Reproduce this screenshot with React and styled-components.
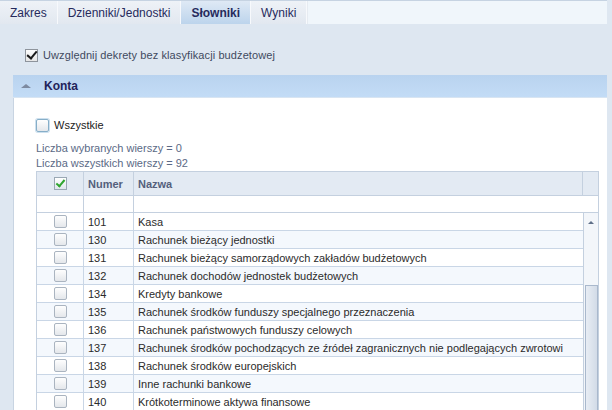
import styled, { createGlobalStyle } from "styled-components";

const GlobalStyle = createGlobalStyle`
  html, body {
    margin: 0;
    padding: 0;
    background: #dee7f1;
  }
  body {
    font-family: Tahoma, "Liberation Sans", Arial, sans-serif;
    font-size: 11px;
  }
`;

const rows = [
  ["101", "Kasa"],
  ["130", "Rachunek bieżący jednostki"],
  ["131", "Rachunek bieżący samorządowych zakładów budżetowych"],
  ["132", "Rachunek dochodów jednostek budżetowych"],
  ["134", "Kredyty bankowe"],
  ["135", "Rachunek środków funduszy specjalnego przeznaczenia"],
  ["136", "Rachunek państwowych funduszy celowych"],
  ["137", "Rachunek środków pochodzących ze źródeł zagranicznych nie podlegających zwrotowi"],
  ["138", "Rachunek środków europejskich"],
  ["139", "Inne rachunki bankowe"],
  ["140", "Krótkoterminowe aktywa finansowe"],
];

const tabs = ["Zakres", "Dzienniki/Jednostki", "Słowniki", "Wyniki"];

export default function App() {
  return (
    <>
      <GlobalStyle />
      <Page>
        <TabBar>
          {tabs.map((t) => (
            <Tab key={t} $active={t === "Słowniki"}>
              {t}
            </Tab>
          ))}
          <TabFill />
        </TabBar>

        <TopOption>
          <CheckBox $checked />
          <span>Uwzględnij dekrety bez klasyfikacji budżetowej</span>
        </TopOption>

        <Panel>
          <PanelHeader>
            <Triangle />
            Konta
          </PanelHeader>
          <PanelBody>
            <AllOption>
              <PlainBox $highlight />
              <span>Wszystkie</span>
            </AllOption>
            <Info>Liczba wybranych wierszy = 0</Info>
            <Info>Liczba wszystkich wierszy = 92</Info>

            <Grid>
              <HeadRow>
                <HeadCell $w={47} $center>
                  <GreenCheck />
                </HeadCell>
                <HeadCell $w={50}>Numer</HeadCell>
                <HeadCell $grow>Nazwa</HeadCell>
                <HeadCell $w={15} $last />
              </HeadRow>
              <FilterRow>
                <FilterCell $w={47} />
                <FilterCell $w={50} />
                <FilterCell $grow $last />
              </FilterRow>
              <Body>
                <Rows>
                  {rows.map(([num, name], i) => (
                    <Row key={num} $alt={i % 2 === 1}>
                      <Cell $w={47} $center>
                        <PlainBox />
                      </Cell>
                      <Cell $w={50}>{num}</Cell>
                      <Cell $grow $last>
                        {name}
                      </Cell>
                    </Row>
                  ))}
                </Rows>
                <ScrollBar>
                  <ScrollArrow />
                  <ScrollThumb />
                </ScrollBar>
              </Body>
            </Grid>
          </PanelBody>
        </Panel>
      </Page>
    </>
  );
}

const Page = styled.div`
  width: 612px;
  height: 410px;
  overflow: hidden;
  background: #dee7f1;
  color: #333;
`;

const TabBar = styled.div`
  display: flex;
  height: 24px;
  margin-right: 5px;
  border-top: 1px solid #c6d3e2;
  box-sizing: border-box;
`;

const Tab = styled.div`
  display: flex;
  align-items: center;
  padding: 0 10px;
  font-size: 12px;
  color: #262a5c;
  font-weight: ${(p) => (p.$active ? "bold" : "normal")};
  background: ${(p) =>
    p.$active
      ? "linear-gradient(#dfe9f5, #bcd4ec)"
      : "linear-gradient(#eef2f7, #e2e8f0)"};
  border-right: 1px solid #f7f9fc;
`;

const TabFill = styled.div`
  flex: 1;
  background: #f0f6fb;
  border-left: 1px solid #e6ebf1;
`;

const TopOption = styled.label`
  display: flex;
  align-items: center;
  gap: 5px;
  padding: 24px 0 0 25px;
  height: 14px;
  color: #3f4a60;
  letter-spacing: 0.1px;
`;

const CheckBox = styled.span`
  position: relative;
  width: 11px;
  height: 11px;
  border: 1px solid #8e949c;
  background: linear-gradient(#fdfdfd, #e6e6e6);
  &::after {
    content: "";
    position: absolute;
    left: 3px;
    top: -1px;
    width: 4px;
    height: 8px;
    border: solid #1a1a1a;
    border-width: 0 2px 2px 0;
    transform: rotate(40deg);
  }
`;

const Panel = styled.div`
  margin: 13px 5px 0 13px;
  background: #fff;
  height: 400px;
`;

const PanelHeader = styled.div`
  display: flex;
  align-items: center;
  height: 22px;
  background: linear-gradient(#b9d3ef, #c3dcf6);
  border-bottom: 1px solid #d8e5f2;
  font-weight: bold;
  font-size: 12px;
  color: #22235a;
  padding-left: 8px;
  gap: 13px;
`;

const Triangle = styled.span`
  width: 0;
  height: 0;
  border-left: 5px solid transparent;
  border-right: 5px solid transparent;
  border-bottom: 4px solid #7d8aa0;
`;

const PanelBody = styled.div`
  border-left: 1px solid #c8d4e2;
  padding: 20px 8px 0 22px;
  height: 320px;
`;

const AllOption = styled.label`
  display: flex;
  align-items: center;
  gap: 5px;
  height: 14px;
  color: #222;
  margin-bottom: 9px;
`;

const PlainBox = styled.span`
  display: inline-block;
  box-sizing: border-box;
  width: 13px;
  height: 13px;
  border: 1px solid ${(p) => (p.$highlight ? "#86aec8" : "#aab4c0")};
  border-radius: 2px;
  background: linear-gradient(#fefefe, #e4e7eb);
  box-shadow: ${(p) => (p.$highlight ? "0 0 0 1px #cde0ee" : "none")};
`;

const Info = styled.div`
  color: #5b6a86;
  height: 14px;
  line-height: 14px;
  margin-bottom: 1px;
`;

const Grid = styled.div`
  width: 563px;
  border: 1px solid #c4d0df;
  border-bottom: none;
  box-sizing: border-box;
`;

const HeadRow = styled.div`
  display: flex;
  height: 23px;
  background: #e3eaf3;
  border-bottom: 1px solid #c4d0df;
`;

const HeadCell = styled.div`
  display: flex;
  align-items: center;
  justify-content: ${(p) => (p.$center ? "center" : "flex-start")};
  box-sizing: border-box;
  width: ${(p) => (p.$w ? `${p.$w}px` : "auto")};
  flex: ${(p) => (p.$grow ? 1 : "none")};
  padding: 0 4px;
  font-weight: bold;
  color: #545f7c;
  border-right: ${(p) => (p.$last ? "none" : "1px solid #c4d0df")};
`;

const GreenCheck = styled.span`
  position: relative;
  width: 11px;
  height: 11px;
  border: 1px solid #9aa8b4;
  background: linear-gradient(#fff, #dfe6ec);
  &::after {
    content: "";
    position: absolute;
    left: 3px;
    top: 0;
    width: 3px;
    height: 7px;
    border: solid #2fa52f;
    border-width: 0 2px 2px 0;
    transform: rotate(40deg);
  }
`;

const FilterRow = styled.div`
  display: flex;
  height: 16px;
  border-bottom: 1px solid #c4d0df;
`;

const FilterCell = styled.div`
  box-sizing: border-box;
  width: ${(p) => (p.$w ? `${p.$w}px` : "auto")};
  flex: ${(p) => (p.$grow ? 1 : "none")};
  border-right: ${(p) => (p.$last ? "none" : "1px solid #c4d0df")};
`;

const Body = styled.div`
  display: flex;
`;

const Rows = styled.div`
  flex: 1;
  border-right: 1px solid #c4d0df;
`;

const Row = styled.div`
  display: flex;
  height: 17px;
  border-bottom: 1px solid #c9d6e6;
  background: ${(p) => (p.$alt ? "#f4f8fd" : "#fff")};
`;

const Cell = styled.div`
  display: flex;
  align-items: center;
  justify-content: ${(p) => (p.$center ? "center" : "flex-start")};
  box-sizing: border-box;
  width: ${(p) => (p.$w ? `${p.$w}px` : "auto")};
  flex: ${(p) => (p.$grow ? 1 : "none")};
  padding: 0 4px;
  white-space: nowrap;
  overflow: hidden;
  color: #2b2b2b;
  border-right: ${(p) => (p.$last ? "none" : "1px solid #c9d6e6")};
`;

const ScrollBar = styled.div`
  width: 14px;
  display: flex;
  flex-direction: column;
  align-items: center;
  background: #f3f6fa;
`;

const ScrollArrow = styled.span`
  margin-top: 8px;
  width: 0;
  height: 0;
  border-left: 3px solid transparent;
  border-right: 3px solid transparent;
  border-bottom: 3px solid #5f6f88;
`;

const ScrollThumb = styled.div`
  margin-top: 61px;
  width: 13px;
  height: 140px;
  box-sizing: border-box;
  border: 1px solid #a9b8cc;
  background: linear-gradient(90deg, #e8edf4, #d2dbe7);
`;
